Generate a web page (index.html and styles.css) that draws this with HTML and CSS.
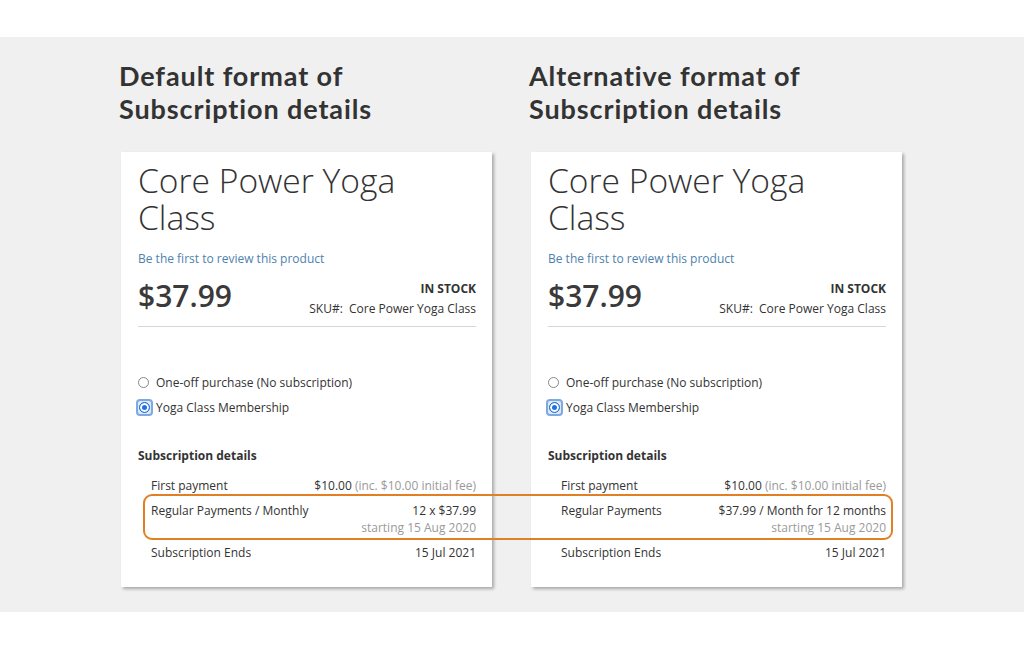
FILE: index.html
```html
<!DOCTYPE html>
<html lang="en">
<head>
    <meta charset="UTF-8">
    <meta name="viewport" content="width=device-width, initial-scale=1.0">
    <title>Subscription details formats</title>
    <link rel="stylesheet" href="styles.css">
</head>
<body>

<div class="band">
    <div class="compare">

        <div class="col">
            <h2 class="col-title">Default format of<br>Subscription details</h2>
            <div class="card">
                <h1 class="product-name">Core Power Yoga Class</h1>
                <a class="review-link" href="#">Be the first to review this product</a>
                <div class="price-row">
                    <div class="price">$37.99</div>
                    <div class="stock">
                        <div class="in-stock">IN STOCK</div>
                        <div class="sku">SKU#:&nbsp; Core Power Yoga Class</div>
                    </div>
                </div>
                <div class="options">
                    <div class="option"><span class="radio"></span>One-off purchase (No subscription)</div>
                    <div class="option"><span class="radio-focus"><span class="radio checked"></span></span>Yoga Class Membership</div>
                </div>
                <div class="details-title">Subscription details</div>
                <div class="details">
                    <div class="detail-row">
                        <span>First payment</span>
                        <span class="value">$10.00 <span class="muted">(inc. $10.00 initial fee)</span></span>
                    </div>
                    <div class="detail-row">
                        <span>Regular Payments / Monthly</span>
                        <span class="value">12 x $37.99<br><span class="muted">starting 15 Aug 2020</span></span>
                    </div>
                    <div class="detail-row">
                        <span>Subscription Ends</span>
                        <span class="value">15 Jul 2021</span>
                    </div>
                </div>
            </div>
        </div>

        <div class="col">
            <h2 class="col-title">Alternative format of<br>Subscription details</h2>
            <div class="card">
                <h1 class="product-name">Core Power Yoga Class</h1>
                <a class="review-link" href="#">Be the first to review this product</a>
                <div class="price-row">
                    <div class="price">$37.99</div>
                    <div class="stock">
                        <div class="in-stock">IN STOCK</div>
                        <div class="sku">SKU#:&nbsp; Core Power Yoga Class</div>
                    </div>
                </div>
                <div class="options">
                    <div class="option"><span class="radio"></span>One-off purchase (No subscription)</div>
                    <div class="option"><span class="radio-focus"><span class="radio checked"></span></span>Yoga Class Membership</div>
                </div>
                <div class="details-title">Subscription details</div>
                <div class="details">
                    <div class="detail-row">
                        <span>First payment</span>
                        <span class="value">$10.00 <span class="muted">(inc. $10.00 initial fee)</span></span>
                    </div>
                    <div class="detail-row">
                        <span>Regular Payments</span>
                        <span class="value">$37.99 / Month for 12 months<br><span class="muted">starting 15 Aug 2020</span></span>
                    </div>
                    <div class="detail-row">
                        <span>Subscription Ends</span>
                        <span class="value">15 Jul 2021</span>
                    </div>
                </div>
            </div>
        </div>

        <!-- highlight around the regular payments rows -->
        <div class="highlight"></div>
    </div>
</div>

</body>
</html>
```

FILE: styles.css
```css
body {
    margin: 0;
    background: #ffffff;
    font-family: "Open Sans", sans-serif;
    color: #333333;
}

.band {
    margin-top: 37px;
    height: 575px;
    background: #f0f0f0;
    padding-top: 22px;
    box-sizing: border-box;
}

.compare {
    position: relative;
    display: flex;
    gap: 37px;
    margin-left: 119px;
}

.col {
    width: 373px;
}

.col-title {
    margin: 0 0 27px 0;
    font-family: "Lato", sans-serif;
    font-weight: 700;
    font-size: 27px;
    line-height: 33px;
    letter-spacing: 0.9px;
    color: #333333;
}

.card {
    background: #ffffff;
    margin-left: 2px;
    padding: 10px 16px 22px 17px;
    box-shadow: 2px 2px 3px rgba(0, 0, 0, 0.3);
}

.product-name {
    margin: 0;
    font-weight: 300;
    font-size: 33.6px;
    line-height: 37px;
    color: #333333;
    width: 280px;
}

.review-link {
    display: block;
    margin-top: 14px;
    font-size: 12px;
    line-height: 18px;
    color: #4d82ad;
    text-decoration: none;
}

.price-row {
    display: flex;
    justify-content: space-between;
    align-items: flex-start;
    margin-top: 10px;
    padding-bottom: 7px;
    border-bottom: 1px solid #d6d6d6;
}

.price {
    font-size: 30px;
    font-weight: 600;
    line-height: 36px;
    color: #3a3a3a;
}

.stock {
    text-align: right;
    padding-top: 1px;
    font-size: 12px;
    line-height: 20px;
}

.in-stock {
    font-weight: 700;
}

.options {
    margin-top: 43px;
}

.option {
    display: flex;
    align-items: center;
    height: 25px;
    font-size: 12px;
}

.radio {
    width: 9px;
    height: 9px;
    border: 1px solid #888888;
    border-radius: 50%;
    margin: 0 7px 0 0;
    box-sizing: content-box;
}

.radio-focus {
    display: flex;
    align-items: center;
    justify-content: center;
    width: 13px;
    height: 13px;
    margin: 0 3px 0 -2px;
    border: 2px solid #7fa9de;
    border-radius: 4px;
    background: #dce9f8;
}

.radio.checked {
    margin: 0;
    border-color: #2a6fd0;
    background: #1a73e8;
    box-shadow: inset 0 0 0 2px #ffffff;
}

.details-title {
    margin-top: 26px;
    font-weight: 700;
    font-size: 12px;
    line-height: 20px;
}

.details {
    margin-top: 7px;
    padding-left: 13px;
}

.detail-row {
    display: flex;
    justify-content: space-between;
    align-items: flex-start;
    padding: 4px 0;
    font-size: 12px;
    line-height: 17px;
}

.value {
    text-align: right;
}

.muted {
    color: #9a9a9a;
}

.highlight {
    position: absolute;
    left: 24px;
    top: 435px;
    width: 750px;
    height: 46px;
    border: 2px solid #e27f24;
    border-radius: 9px;
    box-sizing: border-box;
}
```
